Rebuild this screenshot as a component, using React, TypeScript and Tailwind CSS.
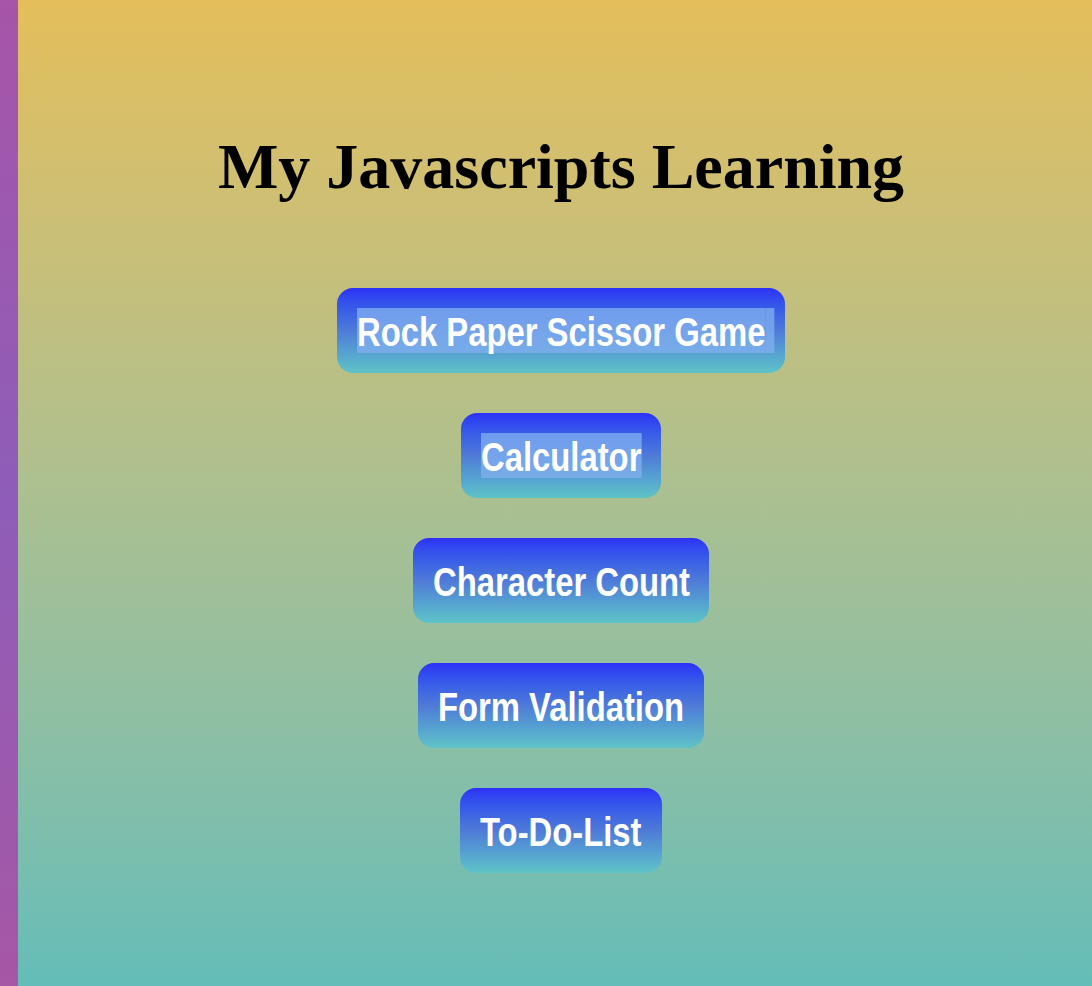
import { useLayoutEffect, useRef, useState } from "react";

const projects: { name: string; selected?: boolean; trailing?: boolean }[] = [
  { name: "Rock Paper Scissor Game", selected: true, trailing: true },
  { name: "Calculator", selected: true },
  { name: "Character Count" },
  { name: "Form Validation" },
  { name: "To-Do-List" },
];

// no narrow font installed, so squeeze the regular one
const NARROW = 0.82;

const NarrowLabel = ({
  text,
  selected,
  trailing,
}: {
  text: string;
  selected?: boolean;
  trailing?: boolean;
}) => {
  const inner = useRef<HTMLSpanElement>(null);
  const [width, setWidth] = useState<number | undefined>(undefined);

  useLayoutEffect(() => {
    if (inner.current) setWidth(inner.current.offsetWidth * NARROW);
  }, [text]);

  return (
    <span className="inline-block align-top" style={{ width }}>
      <span
        ref={inner}
        className={`relative inline-block origin-left scale-x-[0.82] whitespace-nowrap ${selected ? "bg-[rgba(129,176,239,0.77)]" : ""}`}
      >
        <span className="relative top-[2px]">{text}</span>
        {trailing && (
          <span className="absolute left-full top-0 h-full w-[11px] bg-[rgba(129,176,239,0.77)]" />
        )}
      </span>
    </span>
  );
};

const App = () => {
  return (
    <div className="flex min-h-screen w-full">
      <div className="w-[18px] shrink-0 bg-gradient-to-b from-[#a655a8] via-[#8e5db8] to-[#a657a5]" />
      <main className="flex min-h-screen flex-1 flex-col items-center bg-gradient-to-b from-[#e4be5a] to-[#64bdb8] pl-3">
        <h1 className="mt-[131px] font-['Liberation_Serif','Times_New_Roman',serif] text-[64px] font-bold leading-[71px] text-black">
          My Javascripts Learning
        </h1>
        <div className="mt-[86px] flex flex-col items-center gap-10">
          {projects.map((p) => (
            <button
              key={p.name}
              className="rounded-2xl bg-gradient-to-b from-[#2e30f6] via-[#4f7ad8] to-[#5fc3c6] p-5 font-['Liberation_Sans','Arial',sans-serif] text-[40px] font-bold leading-[45px] text-white"
            >
              <NarrowLabel text={p.name} selected={p.selected} trailing={p.trailing} />
            </button>
          ))}
        </div>
      </main>
    </div>
  );
};

export default App;
